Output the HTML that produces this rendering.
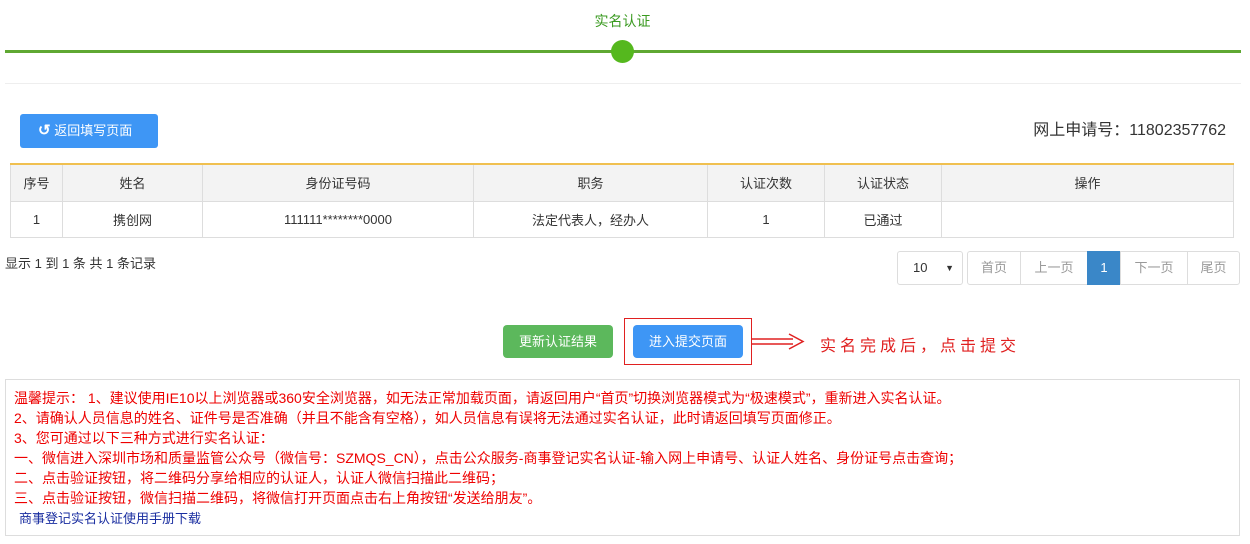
<!DOCTYPE html>
<html><head><meta charset="utf-8"><style>
*{margin:0;padding:0;box-sizing:border-box}
body{width:1250px;height:544px;background:#fff;font-family:"Liberation Sans","Microsoft YaHei","Noto Sans CJK SC",sans-serif;font-size:13px;color:#333;position:relative;overflow:hidden}
.a{position:absolute}
table{border-collapse:collapse;position:absolute;left:10px;top:163px;width:1224px;border-top:2px solid #f0c050}
td{border:1px solid #ddd;text-align:center;height:36px;font-size:13px;color:#333}
tr.h td{background:#f3f3f3;height:37px}
.pg{position:absolute;top:251px;height:34px;border:1px solid #ddd;text-align:center;line-height:32px;color:#999;font-size:13px}
.btn{position:absolute;top:325px;height:33px;width:110px;border-radius:4px;color:#fff;text-align:center;line-height:33px;font-size:13px}
.nb{position:absolute;left:5px;top:379px;width:1235px;height:157px;border:1px solid #ddd;padding:8px 0 0 8px;font-size:14px;line-height:20px;color:#e00}
</style></head><body>
<div class="a" style="left:0;top:11px;width:1245px;text-align:center;color:#3a9a20;font-size:14px;">实名认证</div>
<div class="a" style="left:5px;top:50px;width:1236px;height:3px;background:#5fa832"></div>
<div class="a" style="left:611px;top:40px;width:23px;height:23px;border-radius:50%;background:#55b81e"></div>
<div class="a" style="left:5px;top:83px;width:1236px;height:1px;background:#eee"></div>
<div class="a" style="left:20px;top:114px;width:138px;height:34px;background:#3e96f5;border-radius:3px;color:#fff;line-height:34px;font-size:13px;padding-left:18px"><span style="font-weight:bold;font-size:15px">↺</span> 返回填写页面</div>
<div class="a" style="right:24px;top:116px;font-size:16px;color:#333">网上申请号：11802357762</div>
<table>
<tr class="h"><td style="width:52px">序号</td><td style="width:140px">姓名</td><td style="width:271px">身份证号码</td><td style="width:234px">职务</td><td style="width:117px">认证次数</td><td style="width:117px">认证状态</td><td>操作</td></tr>
<tr><td>1</td><td>携创网</td><td>111111********0000</td><td>法定代表人，经办人</td><td>1</td><td>已通过</td><td></td></tr>
</table>
<div class="a" style="left:5px;top:253px;font-size:13px">显示 1 到 1 条 共 1 条记录</div>
<div class="pg" style="left:897px;width:66px;color:#333;text-align:left;padding-left:15px;border-radius:3px">10 <span style="position:absolute;right:8px;font-size:9px">▼</span></div>
<div class="pg" style="left:967px;width:54px;border-radius:3px 0 0 3px">首页</div>
<div class="pg" style="left:1020px;width:68px">上一页</div>
<div class="pg" style="left:1087px;width:34px;background:#3a87c8;border-color:#3a87c8;color:#fff">1</div>
<div class="pg" style="left:1120px;width:68px">下一页</div>
<div class="pg" style="left:1187px;width:53px;border-radius:0 3px 3px 0">尾页</div>
<div class="btn" style="left:503px;background:#5cb85c">更新认证结果</div>
<div class="a" style="left:624px;top:318px;width:128px;height:47px;border:1.5px solid #e02020"></div>
<div class="btn" style="left:633px;background:#3e96f5">进入提交页面</div>
<svg class="a" style="left:751px;top:332px" width="56" height="20"><path d="M1 7H42M1 12H42M38 2L52 9.5L38 17" fill="none" stroke="#e02020" stroke-width="1.5"/></svg>
<div class="a" style="left:820px;top:332px;color:#e02020;font-size:16px;letter-spacing:4px">实名完成后，点击提交</div>
<div class="nb">温馨提示： 1、建议使用IE10以上浏览器或360安全浏览器，如无法正常加载页面，请返回用户“首页”切换浏览器模式为“极速模式”，重新进入实名认证。<br>2、请确认人员信息的姓名、证件号是否准确（并且不能含有空格），如人员信息有误将无法通过实名认证，此时请返回填写页面修正。<br>3、您可通过以下三种方式进行实名认证：<br>一、微信进入深圳市场和质量监管公众号（微信号：SZMQS_CN），点击公众服务-商事登记实名认证-输入网上申请号、认证人姓名、身份证号点击查询；<br>二、点击验证按钮，将二维码分享给相应的认证人，认证人微信扫描此二维码；<br>三、点击验证按钮，微信扫描二维码，将微信打开页面点击右上角按钮“发送给朋友”。<br><span style="color:#1a2ea0;padding-left:5px;font-size:13px">商事登记实名认证使用手册下载</span></div>
</body></html>
